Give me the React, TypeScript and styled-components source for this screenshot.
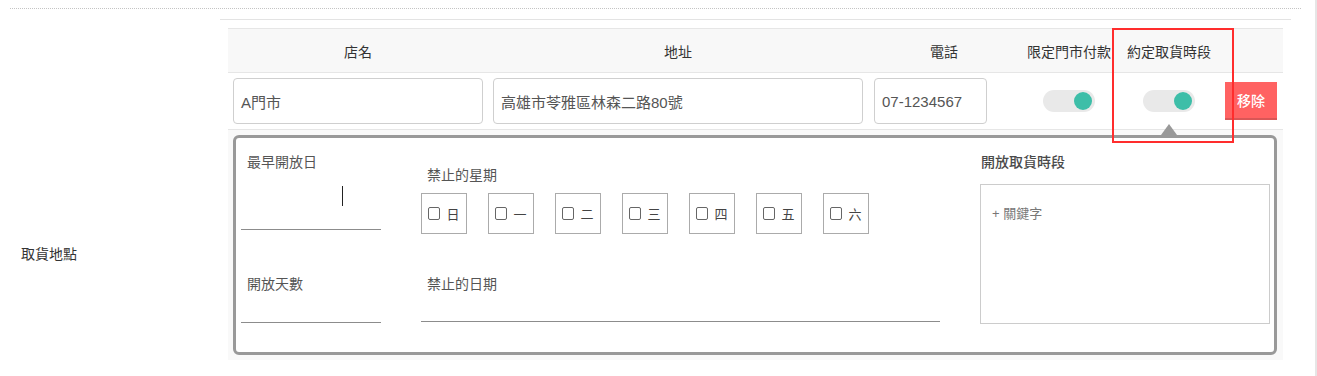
import React from 'react';
import styled, { createGlobalStyle } from 'styled-components';

const GlobalStyle = createGlobalStyle`
    body{
        margin:0;
        background:#ffffff;
        font-family:"Liberation Sans","Noto Sans CJK TC",sans-serif;
        color:#333333;
    }
    *{
        box-sizing:border-box;
    }
`;

const weekdays = ['日', '一', '二', '三', '四', '五', '六'];

const App: React.FC = () =>{
    return(
        <PageWrap>
            <GlobalStyle />
            <DottedLine />
            <FormRow>
                <RowLabel>取貨地點</RowLabel>
                <RowContent>
                    <HeaderRow>
                        <Cell width={260} center>店名</Cell>
                        <Cell width={380} center>地址</Cell>
                        <Cell width={152} center>電話</Cell>
                        <Cell width={98} center>限定門市付款</Cell>
                        <Cell width={102} center>約定取貨時段</Cell>
                        <Cell width={63} />
                    </HeaderRow>
                    <BodyRow>
                        <Cell width={260} pad={5}>
                            <TextBox>A門市</TextBox>
                        </Cell>
                        <Cell width={380} pad={5}>
                            <TextBox>高雄市苓雅區林森二路80號</TextBox>
                        </Cell>
                        <Cell width={152} pad={6}>
                            <TextBox fixed={113}>07-1234567</TextBox>
                        </Cell>
                        <Cell width={98} center>
                            <Toggle><Knob /></Toggle>
                        </Cell>
                        <Cell width={102} center>
                            <Toggle><Knob /></Toggle>
                        </Cell>
                        <Cell width={63} pad={5}>
                            <RemoveButton>移除</RemoveButton>
                        </Cell>
                    </BodyRow>
                    <PanelArea>
                        <Panel>
                            <Caret />
                            <PanelColumn top={14}>
                                <FieldLabel indent={6}>最早開放日</FieldLabel>
                                <LineInput height={58}>
                                    <TextCursor />
                                </LineInput>
                                <FieldLabel indent={6} gap={44}>開放天數</FieldLabel>
                                <LineInput height={29} />
                            </PanelColumn>
                            <PanelColumn top={27}>
                                <FieldLabel indent={6}>禁止的星期</FieldLabel>
                                <DayList>
                                    {weekdays.map((d) => (
                                        <DayBox key={d}>
                                            <CheckMark />
                                            <span>{d}</span>
                                        </DayBox>
                                    ))}
                                </DayList>
                                <FieldLabel indent={6} gap={40}>禁止的日期</FieldLabel>
                                <LineInput height={28} />
                            </PanelColumn>
                            <PanelColumn top={14}>
                                <FieldLabel indent={1} strong>開放取貨時段</FieldLabel>
                                <KeywordBox>
                                    <AddKeyword>+ 關鍵字</AddKeyword>
                                </KeywordBox>
                            </PanelColumn>
                        </Panel>
                    </PanelArea>
                </RowContent>
            </FormRow>
            <Annotation />
        </PageWrap>
    );
}

const PageWrap = styled.div`
    position:relative;
    width:1317px;
    height:376px;
    border-right:2px solid #e6e6e6;
    overflow:hidden;
`;

const DottedLine = styled.div`
    margin:8px 14px 0 10px;
    border-top:1px dotted #c4c4c4;
`;

const FormRow = styled.div`
    display:flex;
    margin-top:10px;
`;

const RowLabel = styled.div`
    width:220px;
    flex-shrink:0;
    padding:225px 0 0 21px;
    font-size:14px;
    line-height:20px;
    color:#333333;
`;

const RowContent = styled.div`
    width:1071px;
    border-top:1px solid #e3e3e3;
    padding:8px 8px 0 8px;
`;

const HeaderRow = styled.div`
    display:flex;
    height:45px;
    background:#f8f8f8;
    border-top:1px solid #e6e6e6;
    border-bottom:1px solid #e6e6e6;
    font-size:14px;
    color:#333333;
`;

const BodyRow = styled.div`
    display:flex;
    height:57px;
    background:#ffffff;
    border-bottom:1px solid #e6e6e6;
`;

const Cell = styled.div<{ width: number; center?: boolean; pad?: number }>`
    width:${(p) => p.width}px;
    flex-shrink:0;
    display:flex;
    align-items:center;
    justify-content:${(p) => (p.center ? 'center' : 'flex-start')};
    padding:0 ${(p) => p.pad || 0}px;
    white-space:nowrap;
`;

const TextBox = styled.div<{ fixed?: number }>`
    width:${(p) => (p.fixed ? `${p.fixed}px` : '100%')};
    height:46px;
    border:1px solid #cfcfcf;
    border-radius:4px;
    padding:0 7px;
    display:flex;
    align-items:center;
    font-size:15px;
    color:#555555;
    background:#ffffff;
`;

const Toggle = styled.div`
    width:52px;
    height:22px;
    border-radius:11px;
    background:#e9e9e9;
    display:flex;
    align-items:center;
    justify-content:flex-end;
    padding-right:3px;
`;

const Knob = styled.div`
    width:18px;
    height:18px;
    border-radius:50%;
    background:#3dbea8;
`;

const RemoveButton = styled.button`
    width:52px;
    height:38px;
    border:none;
    border-bottom:2px solid #d95656;
    background:#ff6262;
    color:#ffffff;
    font-family:inherit;
    font-size:14px;
    font-weight:500;
    padding:0;
`;

const PanelArea = styled.div`
    background:#f9f9f9;
    padding:5px 6px 5px 5px;
`;

const Panel = styled.div`
    position:relative;
    height:220px;
    background:#ffffff;
    border:3px solid #999999;
    border-radius:6px;
    display:grid;
    grid-template-columns:140px 519px 290px;
    column-gap:40px;
    padding:0 4px 0 5px;
`;

const Caret = styled.div`
    position:absolute;
    top:-14px;
    left:925px;
    width:0;
    height:0;
    border-left:8px solid transparent;
    border-right:8px solid transparent;
    border-bottom:11px solid #999999;
`;

const PanelColumn = styled.div<{ top: number }>`
    display:flex;
    flex-direction:column;
    padding-top:${(p) => p.top}px;
`;

const FieldLabel = styled.div<{ indent?: number; gap?: number; strong?: boolean }>`
    padding-left:${(p) => p.indent || 0}px;
    margin-top:${(p) => p.gap || 0}px;
    font-size:14px;
    line-height:20px;
    color:${(p) => (p.strong ? '#4a4a4a' : '#555555')};
    font-weight:${(p) => (p.strong ? 500 : 400)};
`;

const LineInput = styled.div<{ height: number }>`
    height:${(p) => p.height}px;
    border-bottom:1px solid #8c8c8c;
`;

const TextCursor = styled.span`
    display:block;
    width:1px;
    height:20px;
    margin:14px 0 0 101px;
    background:#222222;
`;

const DayList = styled.div`
    display:flex;
    gap:21px;
    margin-top:8px;
`;

const DayBox = styled.div`
    width:46px;
    height:41px;
    border:1px solid #ababab;
    display:flex;
    align-items:center;
    justify-content:center;
    gap:6px;
    font-size:13px;
    color:#444444;
`;

const CheckMark = styled.span`
    width:12px;
    height:13px;
    border:1px solid #666666;
    border-radius:2px;
`;

const KeywordBox = styled.div`
    margin-top:12px;
    height:140px;
    border:1px solid #cccccc;
    padding:19px 0 0 11px;
`;

const AddKeyword = styled.div`
    font-size:13px;
    line-height:20px;
    color:#777777;
`;

const Annotation = styled.div`
    position:absolute;
    left:1112px;
    top:28px;
    width:122px;
    height:115px;
    border:2px solid #ff2d2d;
    pointer-events:none;
`;

export default App;
